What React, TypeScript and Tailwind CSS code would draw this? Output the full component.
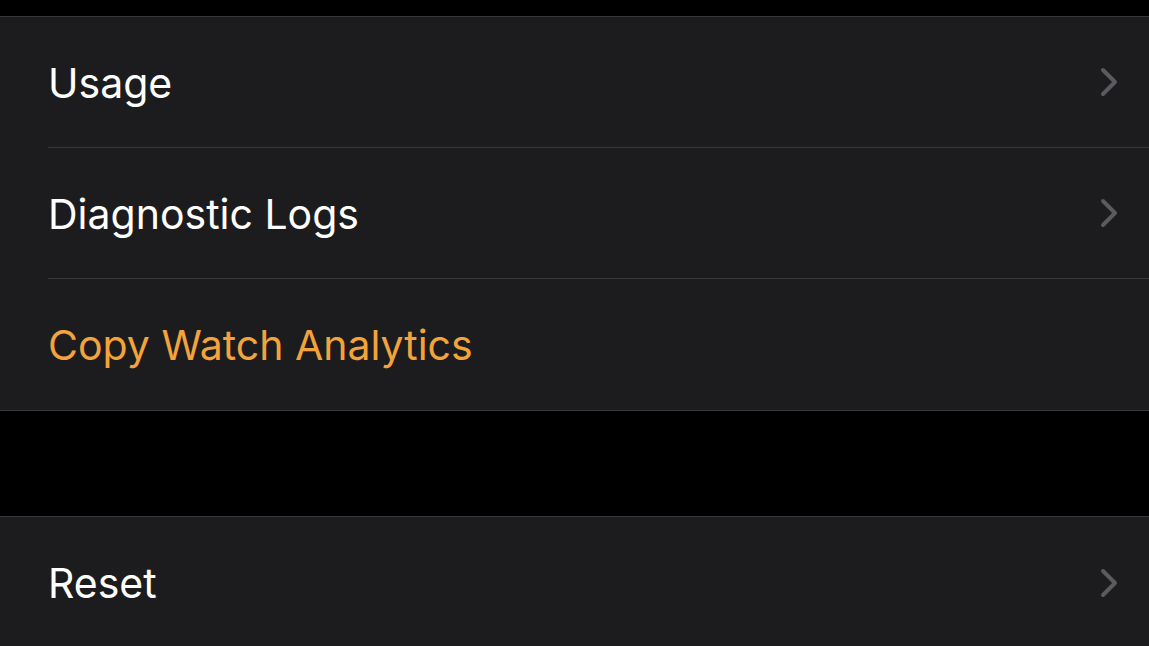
import React from "react";

const Chevron = () => (
  <svg width="20" height="30" viewBox="0 0 20 30" className="shrink-0">
    <path d="M4 3 L16 15 L4 27" fill="none" stroke="#5b5b5f" strokeWidth="4" strokeLinecap="round" strokeLinejoin="round" />
  </svg>
);

const Row = ({ label, orange, chevron, last }: { label: string; orange?: boolean; chevron?: boolean; last?: boolean }) => (
  <div className="pl-[48px] bg-[#1c1c1e]">
    <div className={`h-[131px] flex items-center pr-[30px] ${last ? "" : "border-b border-[#38383a]"}`}>
      <span className={`flex-1 text-[41px] leading-none pt-[2px] ${orange ? "text-[#f3a33b]" : "text-white"}`}>{label}</span>
      {chevron && <Chevron />}
    </div>
  </div>
);

export default function App() {
  return (
    <div className="w-[1149px] h-[646px] bg-black overflow-hidden" style={{ fontFamily: "Inter, 'Noto Sans', sans-serif" }}>
      <div className="h-[16px]" />
      <div className="border-y border-[#38383a]">
        <Row label="Usage" chevron />
        <Row label="Diagnostic Logs" chevron />
        <Row label="Copy Watch Analytics" orange last />
      </div>
      <div className="h-[105px]" />
      <div className="border-t border-[#38383a]">
        <Row label="Reset" chevron last />
      </div>
    </div>
  );
}
